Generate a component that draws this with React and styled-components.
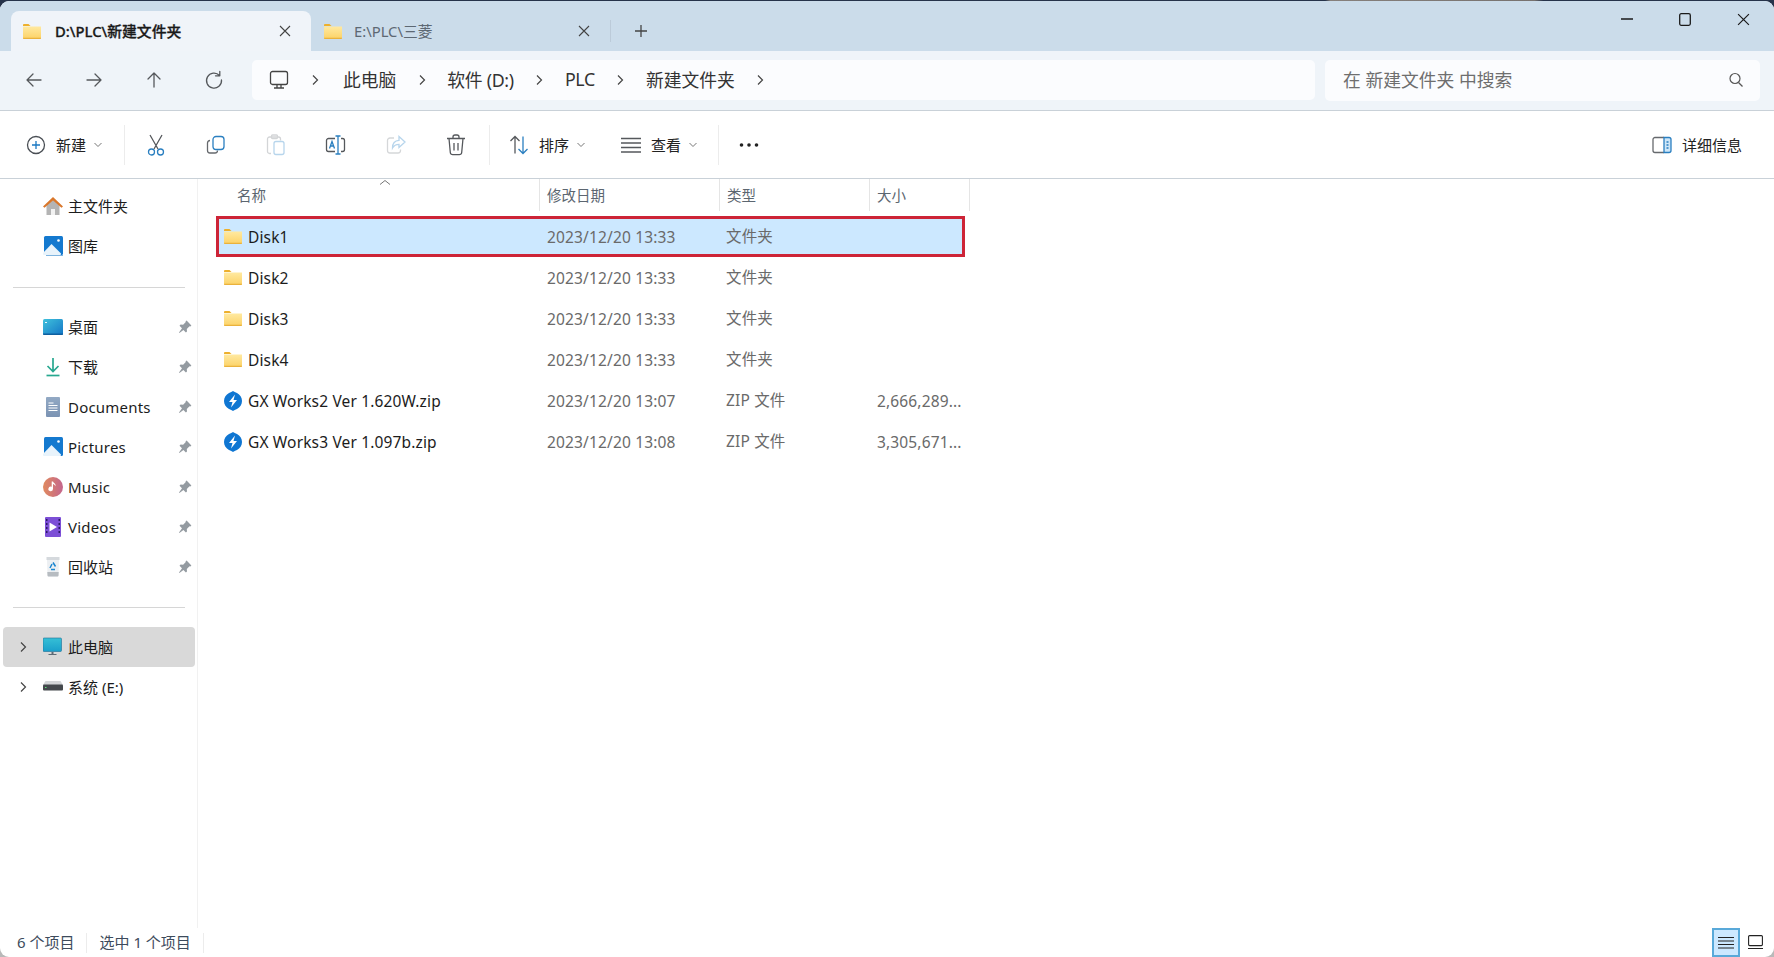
import styled, { createGlobalStyle } from "styled-components";

const GlobalStyle = createGlobalStyle`
  html, body {
    margin: 0;
    height: 100%;
    overflow: hidden;
    background:
      linear-gradient(90deg, transparent 74.700%, #86807c 75%, #77726f 86.500%, transparent 87%) 0 0 / 100% 1px no-repeat,
      linear-gradient(#26334a 50%, #b9b9b9 50%);
  }
  #root {
    height: 100%;
  }
  * {
    box-sizing: border-box;
  }
`;

const Window = styled.div`
  height: 956px;
  margin-top: 1px;
  display: flex;
  flex-direction: column;
  overflow: hidden;
  border-radius: 9px;
  background: #fff;
  font-family: "Noto Sans", "Noto Sans CJK SC", sans-serif;
  color: #1c1c1c;
`;

/* ---------- tabs ---------- */
const TitleBar = styled.div`
  height: 50px;
  flex: none;
  display: flex;
  align-items: flex-end;
  padding-left: 11px;
  background: #cbdcea;
`;
const Tab = styled.div`
  width: ${(p) => (p.$active ? 300 : 299)}px;
  height: 40px;
  display: flex;
  align-items: center;
  padding-left: ${(p) => (p.$active ? 12 : 13)}px;
  gap: ${(p) => (p.$active ? 14 : 12)}px;
  border-radius: 8px 8px 0 0;
  background: ${(p) => (p.$active ? "#f0f4f9" : "transparent")};
  color: ${(p) => (p.$active ? "#1a1a1a" : "#5d6873")};
  font-size: 14.800px;
  font-weight: ${(p) => (p.$active ? 500 : 400)};
  -webkit-text-stroke: ${(p) => (p.$active ? "0.3px" : "0")};
`;
const TabText = styled.span`
  margin-bottom: 2px;
`;
const TabClose = styled.span`
  margin-left: auto;
  margin-right: 20px;
  display: flex;
  color: #444;
`;
const TabSep = styled.span`
  width: 1px;
  height: 22px;
  margin-bottom: 9px;
  background: #bccbd9;
`;
const NewTab = styled.span`
  margin: 0 0 13px 23px;
  display: flex;
  color: #444;
`;
const WindowControls = styled.div`
  margin-left: auto;
  padding-right: 2px;
  align-self: flex-start;
  display: flex;
`;
const WindowButton = styled.span`
  width: 58px;
  height: 36px;
  display: flex;
  align-items: center;
  justify-content: center;
  color: #1a1a1a;
`;

/* ---------- address row ---------- */
const NavBar = styled.div`
  height: 60px;
  flex: none;
  display: flex;
  align-items: center;
  padding: 0 14px 1px 4px;
  background: #eff4f9;
  border-bottom: 1px solid #c9d1d8;
`;
const NavButton = styled.span`
  width: 60px;
  display: flex;
  justify-content: center;
  color: #55585c;
`;
const Address = styled.div`
  flex: 1;
  height: 40px;
  margin-left: 8px;
  padding-left: 17px;
  display: flex;
  align-items: center;
  gap: 20.500px;
  border-radius: 5px;
  background: #fbfcfe;
  font-size: 17.800px;
  color: #333;
`;
const CrumbText = styled.span`
  margin-bottom: 2px;
  margin-left: ${(p) => (p.$first ? 3 : 0)}px;
  letter-spacing: ${(p) => (p.$latin ? -0.3 : 0)}px;
`;
const SearchBox = styled.div`
  width: 435px;
  height: 41px;
  margin-left: 10px;
  padding: 0 16px 0 18px;
  display: flex;
  align-items: center;
  justify-content: space-between;
  border-radius: 5px;
  background: #fbfcfe;
  font-size: 17.800px;
  color: #6e6e6e;
`;
const SearchText = styled.span`
  margin-bottom: 2px;
`;

/* ---------- command bar ---------- */
const Toolbar = styled.div`
  height: 68px;
  flex: none;
  display: flex;
  align-items: center;
  padding-left: 26px;
  border-bottom: 1px solid #c9d1d8;
  font-size: 15px;
  color: #222;
`;
const Divider = styled.span`
  width: 1px;
  height: 40px;
  flex: none;
  margin: 0 ${(p) => p.$right || 0}px 0 ${(p) => p.$left || 0}px;
  background: #ececec;
`;
const ToolButton = styled.span`
  display: flex;
  align-items: center;
  gap: 10px;
  margin-left: ${(p) => p.$left || 0}px;
`;
const ToolCaret = styled.span`
  display: flex;
  margin-left: -3px;
  color: #777;
`;
const IconButton = styled.span`
  width: 60px;
  display: flex;
  justify-content: center;
`;
const DetailsButton = styled(ToolButton)`
  margin-left: auto;
  padding-right: 32px;
`;

/* ---------- main ---------- */
const Main = styled.div`
  flex: 1;
  min-height: 0;
  display: flex;
`;
const Sidebar = styled.nav`
  width: 198px;
  flex: none;
  padding-top: 7px;
  border-right: 1px solid #f1f1f1;
  font-size: 15px;
`;
const NavItem = styled.div`
  width: 192px;
  height: 40px;
  margin-left: 3px;
  padding-right: 3px;
  display: flex;
  align-items: center;
  border-radius: 4px;
  background: ${(p) => (p.$selected ? "#d9d9d9" : "transparent")};
`;
const Expander = styled.span`
  width: 40px;
  flex: none;
  display: flex;
  justify-content: center;
  color: #777;
`;
const NavLabel = styled.span`
  margin-left: 5px;
  margin-bottom: ${(p) => (p.$latin ? 0 : 1)}px;
  letter-spacing: ${(p) => (p.$latin ? 0.2 : 0)}px;
`;
const Pin = styled.span`
  margin-left: auto;
  display: flex;
`;
const NavRule = styled.div`
  height: 1px;
  margin: ${(p) => p.$top}px 12px ${(p) => p.$bottom}px 13px;
  background: #d6d6d6;
`;

const FileArea = styled.section`
  flex: 1;
  padding-left: 18px;
`;
const HeaderRow = styled.div`
  width: 754px;
  height: 32px;
  display: grid;
  grid-template-columns: 324px 180px 150px 100px;
  font-size: 14.500px;
  color: #5c6670;
`;
const HeaderCell = styled.div`
  position: relative;
  display: flex;
  align-items: center;
  padding-left: ${(p) => p.$pad || 7}px;
  padding-bottom: 2px;
  border-right: 1px solid #e5e5e5;
`;
const SortCaret = styled.span`
  position: absolute;
  left: 163px;
  top: 0;
  display: flex;
  color: #777;
`;
const FileRow = styled.div`
  width: 749px;
  height: 41px;
  margin-top: ${(p) => (p.$first ? 5 : 0)}px;
  display: grid;
  grid-template-columns: 323px 180px 151px 95px;
  align-items: center;
  font-size: 15.500px;
  letter-spacing: 0.15px;
  color: #6a6a6a;
  background: ${(p) => (p.$selected ? "#cce8ff" : "transparent")};
  box-shadow: ${(p) => (p.$selected ? "inset 0 0 0 3px #cd2437" : "none")};
`;
const NameCell = styled.div`
  display: flex;
  align-items: center;
  gap: 6px;
  padding-left: 8px;
  color: #1c1c1c;
`;
const Cell = styled.div`
  padding-left: ${(p) => p.$pad || 7}px;
  white-space: nowrap;
`;
const TypeCell = styled(Cell)`
  margin-bottom: 2px;
`;

/* ---------- status bar ---------- */
const StatusBar = styled.footer`
  height: 29px;
  flex: none;
  display: flex;
  align-items: center;
  padding-left: 17px;
  font-size: 15px;
  color: #3d4b5c;
`;
const StatusText = styled.span`
  margin-bottom: 2px;
`;
const StatusSep = styled.span`
  width: 1px;
  height: 20px;
  margin: 0 12px;
  background: #ececec;
`;
const ViewToggles = styled.div`
  margin-left: auto;
  margin-right: 11px;
  align-self: flex-end;
  display: flex;
  align-items: center;
  gap: 8px;
`;
const ViewToggle = styled.span`
  width: 28px;
  height: 29px;
  display: flex;
  align-items: center;
  justify-content: center;
  border: 2px solid #59a9d9;
  background: #cce8ff;
`;

/* ---------- drawings ---------- */
const Line = ({ size = 20, sw = 1.3, children }) => (
  <svg width={size} height={size} viewBox="0 0 20 20" fill="none" stroke="currentColor" strokeWidth={sw} strokeLinecap="round" strokeLinejoin="round">
    {children}
  </svg>
);

const Chevron = () => (
  <svg width="10" height="14" viewBox="0 0 10 14" fill="none" stroke="#444" strokeWidth="1.2">
    <path d="M3 2.500 7.500 7 3 11.500" />
  </svg>
);
const SmallChevron = () => (
  <svg width="10" height="8" viewBox="0 0 10 8" fill="none" stroke="currentColor" strokeWidth="1">
    <path d="M1.500 2 5 5.500 8.500 2" />
  </svg>
);
const Close = ({ size = 12, sw = 1.1 }) => (
  <svg width={size} height={size} viewBox="0 0 12 12" fill="none" stroke="currentColor" strokeWidth={sw}>
    <path d="M1 1 11 11M11 1 1 11" />
  </svg>
);

const Folder = ({ w = 18, h = 15 }) => (
  <svg width={w} height={h} viewBox="0 0 18 15">
    <defs>
      <linearGradient id="folderFill" x1="0" y1="0" x2="0" y2="1">
        <stop offset="0" stopColor="#ffe9a0" />
        <stop offset="1" stopColor="#fcd266" />
      </linearGradient>
    </defs>
    <path d="M0 1.200C0 .5.5 0 1.200 0h4.300l2 2H0z" fill="#edb02d" />
    <path d="M0 2.600h18v11.200c0 .7-.5 1.200-1.200 1.200H1.200C.5 15 0 14.500 0 13.800z" fill="url(#folderFill)" />
    <path d="M0 13.800h18v.2c0 .6-.5 1-1.200 1H1.200C.5 15 0 14.600 0 14z" fill="#eab23c" />
  </svg>
);

const GxIcon = () => (
  <svg width="18" height="20" viewBox="0 0 18 20">
    <path d="M9 0c1 1 2.400 1.200 4 2 3 1.500 5 4.500 5 8s-2 6.500-5 8c-1.600.8-3 1-4 2-1-1-2.400-1.200-4-2-3-1.500-5-4.500-5-8s2-6.500 5-8c1.600-.8 3-1 4-2z" fill="#0f76d2" />
    <path d="M11 3.500 5 11h3.500L7 16.500 13 9H9.500z" fill="#fff" />
  </svg>
);

const Home = () => (
  <svg width="20" height="20" viewBox="0 0 20 20">
    <path d="M3.500 9.500 10 4l6.500 5.500V19h-13z" fill="#b4b4b4" />
    <path d="M8 13h4v6H8z" fill="#f2f2f2" />
    <path d="M10 1 0 10.500l1.500 1.300L10 4.500l8.500 7.300 1.500-1.300z" fill="#d9772b" />
  </svg>
);
const Gallery = ({ dark }) => (
  <svg width="20" height="20" viewBox="0 0 20 20">
    <rect x="1" y="0" width="19" height="19" rx="1.500" fill="#1479cf" />
    <path d="M0 17 8.500 8 18 17.500V18a1 1 0 0 1-1 1H1a1 1 0 0 1-1-1z" fill="#e8f3fb" />
    <circle cx="15.500" cy="4.500" r="1.300" fill="#fff" />
    {dark && <path d="M3 19h17v1H3z" fill="#7fb4df" />}
  </svg>
);
const Desktop = () => (
  <svg width="20" height="20" viewBox="0 0 20 20">
    <defs>
      <linearGradient id="deskFill" x1="0" y1="0" x2="1" y2="1">
        <stop offset="0" stopColor="#3fc1dc" />
        <stop offset="1" stopColor="#1476c6" />
      </linearGradient>
    </defs>
    <rect x="0" y="2" width="20" height="16" rx="1.500" fill="url(#deskFill)" />
    <path d="M2 5h2v1H2z" fill="#e8f8fc" />
    <path d="M0 16.500h20V17a1 1 0 0 1-1 1H1a1 1 0 0 1-1-1z" fill="#0e5f9f" />
  </svg>
);
const Download = () => (
  <svg width="20" height="20" viewBox="0 0 20 20" fill="none" stroke="#28a890" strokeWidth="1.700">
    <path d="M10 1v13M4.500 9 10 14.500 15.500 9" />
    <path d="M3.500 18.500h13" />
  </svg>
);
const Documents = () => (
  <svg width="20" height="20" viewBox="0 0 20 20">
    <defs>
      <linearGradient id="docFill" x1="0" y1="0" x2="0" y2="1">
        <stop offset="0" stopColor="#92a9c4" />
        <stop offset="1" stopColor="#7b93b3" />
      </linearGradient>
    </defs>
    <rect x="3" y="0" width="14" height="20" rx="1" fill="url(#docFill)" />
    <path d="M5.500 5.500h5v1h-5zM5.500 8h9v1h-9zM5.500 10.500h9v1h-9zM5.500 13h9v1h-9z" fill="#fff" />
  </svg>
);
const Music = () => (
  <svg width="20" height="20" viewBox="0 0 20 20">
    <defs>
      <linearGradient id="musicFill" x1="0" y1="0" x2="1" y2="0">
        <stop offset="0" stopColor="#e08a5e" />
        <stop offset="1" stopColor="#c4668e" />
      </linearGradient>
    </defs>
    <circle cx="10" cy="10" r="10" fill="url(#musicFill)" />
    <path d="M10 4.500v7.300a2.300 2.300 0 1 1-1.300-2V4.500z" fill="#fff" />
    <path d="M10 4.500c.5 1.500 2.500 2 2.500 3.500 0 .5-.1.900-.3 1.200-.2-1.400-1.300-1.900-2.200-2.200z" fill="#fff" />
  </svg>
);
const Videos = () => (
  <svg width="20" height="20" viewBox="0 0 20 20">
    <rect x="2" y="0" width="16" height="20" rx="1" fill="#7c4fd6" />
    <path d="M3 2h1.500v2H3zM3 6h1.500v2H3zM3 10h1.500v2H3zM3 14h1.500v2H3zM15.500 2H17v2h-1.500zM15.500 6H17v2h-1.500zM15.500 10H17v2h-1.500zM15.500 14H17v2h-1.500z" fill="#2c1a66" />
    <path d="M6.500 5.500v9L14 10z" fill="#fff" />
  </svg>
);
const Recycle = () => (
  <svg width="20" height="20" viewBox="0 0 20 20">
    <path d="M4 2h12l-.5 16.500a1 1 0 0 1-1 1h-9a1 1 0 0 1-1-1z" fill="#eceff2" />
    <path d="M3.500 0h13v3h-13z" fill="#d5d9dd" />
    <path d="M4.300 15h11.400l-.2 3.500a1 1 0 0 1-1 1h-9a1 1 0 0 1-1-1z" fill="#b7bcc1" />
    <path d="M10 5.500 12.500 9.500M12 12.500H8M7 11l2-4" stroke="#1b86d0" strokeWidth="1.500" fill="none" />
  </svg>
);
const ThisPc = () => (
  <svg width="20" height="20" viewBox="0 0 20 20">
    <defs>
      <linearGradient id="pcFill" x1="0" y1="0" x2="0" y2="1">
        <stop offset="0" stopColor="#36c0d6" />
        <stop offset="1" stopColor="#1a9fcb" />
      </linearGradient>
    </defs>
    <rect x="0" y="1" width="18.500" height="13.500" rx="1" fill="url(#pcFill)" stroke="#1c6f96" strokeWidth=".6" />
    <path d="M8.500 15h2v2h-2zM5.500 17h8v1h-8z" fill="#5d6b76" />
  </svg>
);
const Drive = () => (
  <svg width="20" height="20" viewBox="0 0 20 20">
    <path d="M2.500 4h15l2.500 4H0z" fill="#d4d6d8" />
    <rect x="0" y="7.500" width="20" height="6" rx="1" fill="#45494d" />
    <rect x="2" y="10" width="1.500" height="1" fill="#5fe07a" />
  </svg>
);
const PinIcon = () => (
  <svg width="14" height="14" viewBox="0 0 14 14" fill="#949ba1">
    <path d="M8.600.6 13.400 5.400l-1 1-.9-.2-2.700 2.700.2 2.500-1.100 1.100-2.500-2.500L1.400 13l-.4-.4 3-4.400L1.500 5.700l1.100-1.100 2.500.2 2.700-2.700-.2-.9z" />
  </svg>
);

const NewIcon = () => (
  <svg width="20" height="20" viewBox="0 0 20 20" fill="none" strokeWidth="1.300">
    <circle cx="10" cy="10" r="8.500" stroke="#4a4f55" />
    <path d="M10 6v8M6 10h8" stroke="#1a78c2" />
  </svg>
);
const Scissors = () => (
  <svg width="20" height="22" viewBox="0 0 20 22" fill="none" strokeWidth="1.300">
    <path d="M4 1l8 14M16 1 8 15" stroke="#55585c" />
    <circle cx="5.500" cy="18" r="3" stroke="#2a7fc0" />
    <circle cx="14.500" cy="18" r="3" stroke="#2a7fc0" />
  </svg>
);
const CopyIcon = () => (
  <svg width="20" height="20" viewBox="0 0 20 20" fill="none" strokeWidth="1.300">
    <path d="M4 5.500C2.500 5.500 1.500 6.500 1.500 8v7.500c0 1.500 1 2.500 2.500 2.500h5c1.500 0 2.500-1 2.500-2.500" stroke="#66696d" />
    <rect x="7" y="1.500" width="11" height="13" rx="3" stroke="#2a7fc0" />
  </svg>
);
const PasteIcon = () => (
  <svg width="20" height="22" viewBox="0 0 20 22" fill="none" strokeWidth="1.300">
    <path d="M5 19.500H3.500a2 2 0 0 1-2-2V5a2 2 0 0 1 2-2h9a2 2 0 0 1 2 2v1.500" stroke="#d3d5d7" />
    <rect x="5.500" y="1" width="6" height="3.500" rx="1" stroke="#d3d5d7" />
    <rect x="8" y="7.500" width="10" height="13" rx="2" stroke="#b7d5ec" />
  </svg>
);
const RenameIcon = () => (
  <svg width="22" height="20" viewBox="0 0 22 20" fill="none" strokeWidth="1.300">
    <path d="M10 3.500H3.500a2 2 0 0 0-2 2v9a2 2 0 0 0 2 2H10M16 3.500h1.500a2 2 0 0 1 2 2v9a2 2 0 0 1-2 2H16" stroke="#55585c" />
    <path d="M13 1v18M10.500 1h5M10.500 19h5" stroke="#2a7fc0" />
    <path d="M4.500 13.500 7 6.500l2.500 7M5.500 11h3" stroke="#2a7fc0" />
  </svg>
);
const ShareIcon = () => (
  <svg width="20" height="20" viewBox="0 0 20 20" fill="none" strokeWidth="1.300">
    <path d="M8 3H4a2.500 2.500 0 0 0-2.500 2.500v10A2.500 2.500 0 0 0 4 18h8a2.500 2.500 0 0 0 2.500-2.500v-1" stroke="#d5d7d9" />
    <path d="M13 1.500 19 7l-6 5.500V9.300c-3 0-5 1-6.500 3.700 0-4.500 2.500-7.500 6.500-7.700z" stroke="#b7d5ec" />
  </svg>
);
const TrashIcon = () => (
  <svg width="20" height="22" viewBox="0 0 20 22" fill="none" stroke="#55585c" strokeWidth="1.300">
    <path d="M1 4.500h18M3 4.500 4.300 18.500a2.500 2.500 0 0 0 2.500 2.200h6.400a2.500 2.500 0 0 0 2.500-2.200L17 4.500" />
    <path d="M7 4V3a2 2 0 0 1 2-2h2a2 2 0 0 1 2 2v1M8 9v7.500M12 9v7.500" />
  </svg>
);
const SortIcon = () => (
  <svg width="20" height="20" viewBox="0 0 20 20" fill="none" strokeWidth="1.300">
    <path d="M6 18.500V1.500M1.500 6 6 1.500 10.500 6" stroke="#55585c" />
    <path d="M14 1.500v17M9.500 14l4.500 4.500 4.500-4.500" stroke="#2a7fc0" />
  </svg>
);
const ViewIcon = () => (
  <svg width="20" height="20" viewBox="0 0 20 20" fill="none" stroke="#55585c" strokeWidth="1.300">
    <path d="M0 3.500h20M0 8h20M0 12.500h20M0 17h20" />
  </svg>
);
const Dots = () => (
  <svg width="20" height="4" viewBox="0 0 20 4" fill="#222">
    <circle cx="2.500" cy="2" r="1.800" />
    <circle cx="10" cy="2" r="1.800" />
    <circle cx="17.500" cy="2" r="1.800" />
  </svg>
);
const PaneIcon = () => (
  <svg width="20" height="18" viewBox="0 0 20 18" fill="none" strokeWidth="1.300">
    <path d="M12 1.500H3a2 2 0 0 0-2 2v11a2 2 0 0 0 2 2h9" stroke="#66696d" />
    <path d="M12 1.500h5a2 2 0 0 1 2 2v11a2 2 0 0 1-2 2h-5z" fill="#cde6f8" stroke="#2a7fc0" />
    <path d="M14.500 6h2M14.500 9h2M14.500 12h2" stroke="#2a7fc0" />
  </svg>
);

const sideTop = [
  { label: "主文件夹", icon: <Home /> },
  { label: "图库", icon: <Gallery dark /> },
];
const sidePinned = [
  { label: "桌面", icon: <Desktop /> },
  { label: "下载", icon: <Download /> },
  { label: "Documents", icon: <Documents />, latin: true },
  { label: "Pictures", icon: <Gallery />, latin: true },
  { label: "Music", icon: <Music />, latin: true },
  { label: "Videos", icon: <Videos />, latin: true },
  { label: "回收站", icon: <Recycle /> },
];
const files = [
  { name: "Disk1", date: "2023/12/20 13:33", type: "文件夹", selected: true },
  { name: "Disk2", date: "2023/12/20 13:33", type: "文件夹" },
  { name: "Disk3", date: "2023/12/20 13:33", type: "文件夹" },
  { name: "Disk4", date: "2023/12/20 13:33", type: "文件夹" },
  { name: "GX Works2 Ver 1.620W.zip", date: "2023/12/20 13:07", type: "ZIP 文件", size: "2,666,289...", zip: true },
  { name: "GX Works3 Ver 1.097b.zip", date: "2023/12/20 13:08", type: "ZIP 文件", size: "3,305,671...", zip: true },
];
const crumbs = [
  { label: "此电脑" },
  { label: "软件 (D:)", latin: true },
  { label: "PLC", latin: true },
  { label: "新建文件夹" },
];

export default function App() {
  return (
    <Window>
      <GlobalStyle />
      <TitleBar>
        <Tab $active>
          <Folder />
          <TabText>D:\PLC\新建文件夹</TabText>
          <TabClose><Close /></TabClose>
        </Tab>
        <Tab>
          <Folder />
          <TabText>E:\PLC\三菱</TabText>
          <TabClose><Close /></TabClose>
        </Tab>
        <TabSep />
        <NewTab>
          <svg width="14" height="14" viewBox="0 0 14 14" fill="none" stroke="currentColor" strokeWidth="1.300">
            <path d="M7 1v12M1 7h12" />
          </svg>
        </NewTab>
        <WindowControls>
          <WindowButton>
            <svg width="12" height="2" viewBox="0 0 12 2" fill="none" stroke="currentColor" strokeWidth="1.300"><path d="M0 1h12" /></svg>
          </WindowButton>
          <WindowButton>
            <svg width="12" height="13" viewBox="0 0 12 13" fill="none" stroke="currentColor" strokeWidth="1.300"><rect x=".7" y=".7" width="10.600" height="11.600" rx="1.500" /></svg>
          </WindowButton>
          <WindowButton><Close size={13} /></WindowButton>
        </WindowControls>
      </TitleBar>

      <NavBar>
        <NavButton>
          <Line><path d="M17 10H3M9 4l-6 6 6 6" /></Line>
        </NavButton>
        <NavButton>
          <Line><path d="M3 10h14M11 4l6 6-6 6" /></Line>
        </NavButton>
        <NavButton>
          <Line><path d="M10 17V3M4 9l6-6 6 6" /></Line>
        </NavButton>
        <NavButton>
          <Line><path d="M15.500 5.500A7.500 7.500 0 1 0 17.500 10M15.800 1.500v4.300h-4.300" /></Line>
        </NavButton>
        <Address>
          <svg width="20" height="20" viewBox="0 0 20 20" fill="none" stroke="#444" strokeWidth="1.300">
            <rect x="1.500" y="1.500" width="17" height="13" rx="2" />
            <path d="M8 15v2.500M12 15v2.500M5 18h10" />
          </svg>
          {crumbs.map((c, i) => (
            <Crumb key={c.label} label={c.label} latin={c.latin} first={i === 0} />
          ))}
          <Chevron />
        </Address>
        <SearchBox>
          <SearchText>在 新建文件夹 中搜索</SearchText>
          <svg width="16" height="16" viewBox="0 0 16 16" fill="none" stroke="#555" strokeWidth="1.200">
            <circle cx="7" cy="6.500" r="5" />
            <path d="M10.500 10.500 14.500 14.500" />
          </svg>
        </SearchBox>
      </NavBar>

      <Toolbar>
        <ToolButton>
          <NewIcon />
          <span>新建</span>
          <ToolCaret><SmallChevron /></ToolCaret>
        </ToolButton>
        <Divider $left={21} $right={1} />
        <IconButton><Scissors /></IconButton>
        <IconButton><CopyIcon /></IconButton>
        <IconButton><PasteIcon /></IconButton>
        <IconButton><RenameIcon /></IconButton>
        <IconButton><ShareIcon /></IconButton>
        <IconButton><TrashIcon /></IconButton>
        <Divider $left={3} />
        <ToolButton $left={19}>
          <SortIcon />
          <span>排序</span>
          <ToolCaret><SmallChevron /></ToolCaret>
        </ToolButton>
        <ToolButton $left={35}>
          <ViewIcon />
          <span>查看</span>
          <ToolCaret><SmallChevron /></ToolCaret>
        </ToolButton>
        <Divider $left={20} $right={20} />
        <Dots />
        <DetailsButton>
          <PaneIcon />
          <span>详细信息</span>
        </DetailsButton>
      </Toolbar>

      <Main>
        <Sidebar>
          {sideTop.map((item) => (
            <NavItem key={item.label}>
              <Expander />
              {item.icon}
              <NavLabel>{item.label}</NavLabel>
            </NavItem>
          ))}
          <NavRule $top={21} $bottom={19} />
          {sidePinned.map((item) => (
            <NavItem key={item.label}>
              <Expander />
              {item.icon}
              <NavLabel $latin={item.latin}>{item.label}</NavLabel>
              <Pin><PinIcon /></Pin>
            </NavItem>
          ))}
          <NavRule $top={20} $bottom={19} />
          <NavItem $selected>
            <Expander><Chevron /></Expander>
            <ThisPc />
            <NavLabel>此电脑</NavLabel>
          </NavItem>
          <NavItem>
            <Expander><Chevron /></Expander>
            <Drive />
            <NavLabel>系统 (E:)</NavLabel>
          </NavItem>
        </Sidebar>

        <FileArea>
          <HeaderRow>
            <HeaderCell $pad={21}>
              名称
              <SortCaret>
                <svg width="12" height="7" viewBox="0 0 12 7" fill="none" stroke="currentColor" strokeWidth="1"><path d="M1 5.500 6 1.500l5 4" /></svg>
              </SortCaret>
            </HeaderCell>
            <HeaderCell>修改日期</HeaderCell>
            <HeaderCell>类型</HeaderCell>
            <HeaderCell>大小</HeaderCell>
          </HeaderRow>
          {files.map((f, i) => (
            <FileRow key={f.name} $selected={f.selected} $first={i === 0}>
              <NameCell>
                {f.zip ? <GxIcon /> : <Folder />}
                {f.name}
              </NameCell>
              <Cell $pad={8}>{f.date}</Cell>
              <TypeCell>{f.type}</TypeCell>
              <Cell>{f.size}</Cell>
            </FileRow>
          ))}
        </FileArea>
      </Main>

      <StatusBar>
        <StatusText>6 个项目</StatusText>
        <StatusSep />
        <StatusText>选中 1 个项目</StatusText>
        <StatusSep />
        <ViewToggles>
          <ViewToggle>
            <svg width="16" height="14" viewBox="0 0 16 14" fill="none" stroke="#222" strokeWidth="1.100">
              <path d="M0 1.500h16M0 5h16M0 8.500h16M0 12h16" />
            </svg>
          </ViewToggle>
          <svg width="15" height="15" viewBox="0 0 15 15" fill="none" stroke="#222" strokeWidth="1.100">
            <rect x=".6" y=".6" width="13.800" height="10" rx="1" />
            <path d="M0 13.500h15" />
          </svg>
        </ViewToggles>
      </StatusBar>
    </Window>
  );
}

function Crumb({ label, first, latin }) {
  return (
    <>
      <Chevron />
      <CrumbText $first={first} $latin={latin}>{label}</CrumbText>
    </>
  );
}
